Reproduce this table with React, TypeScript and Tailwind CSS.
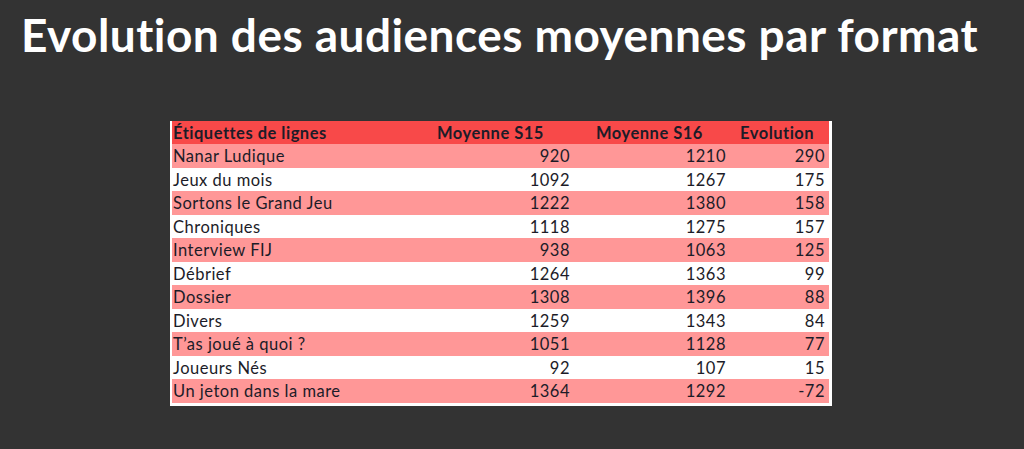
const rows: [string, number, number, number][] = [
  ["Nanar Ludique", 920, 1210, 290],
  ["Jeux du mois", 1092, 1267, 175],
  ["Sortons le Grand Jeu", 1222, 1380, 158],
  ["Chroniques", 1118, 1275, 157],
  ["Interview FIJ", 938, 1063, 125],
  ["Débrief", 1264, 1363, 99],
  ["Dossier", 1308, 1396, 88],
  ["Divers", 1259, 1343, 84],
  ["T’as joué à quoi ?", 1051, 1128, 77],
  ["Joueurs Nés", 92, 107, 15],
  ["Un jeton dans la mare", 1364, 1292, -72],
];

const cols = "grid grid-cols-[258px_144px_156px_99px]";

export default function App() {
  return (
    <div className="h-[449px] w-[1024px] overflow-hidden bg-[#333333]">
      <h1 className="pl-[21px] pt-[6px] text-[46px] leading-[58px] font-bold text-white font-['Lato',sans-serif] tracking-[0.45px]">
        Evolution des audiences moyennes par format
      </h1>
      <div className="ml-[170px] mt-[57px] w-[662px] bg-white pt-0 pb-[3px] pl-[2px] pr-[3px] font-['Lato',sans-serif] text-[16.5px] tracking-[0.5px] text-[#1c1c28]">
        <div className={`${cols} h-[23px] items-center bg-[#f84949] font-bold`}>
          <div className="pl-[1px]">Étiquettes de lignes</div>
          <div className="pl-[7px]">Moyenne S15</div>
          <div className="pl-[22px]">Moyenne S16</div>
          <div className="pl-[10px]">Evolution</div>
        </div>
        {rows.map(([label, s15, s16, evo], i) => (
          <div
            key={label}
            className={`${cols} h-[23.5px] items-center ${i % 2 === 0 ? "bg-[#ff9797]" : "bg-white"}`}
          >
            <div className="pl-[1px]">{label}</div>
            <div className="pr-[4px] text-right">{s15}</div>
            <div className="pr-[4px] text-right">{s16}</div>
            <div className="pr-[4px] text-right">{evo}</div>
          </div>
        ))}
      </div>
    </div>
  );
}
